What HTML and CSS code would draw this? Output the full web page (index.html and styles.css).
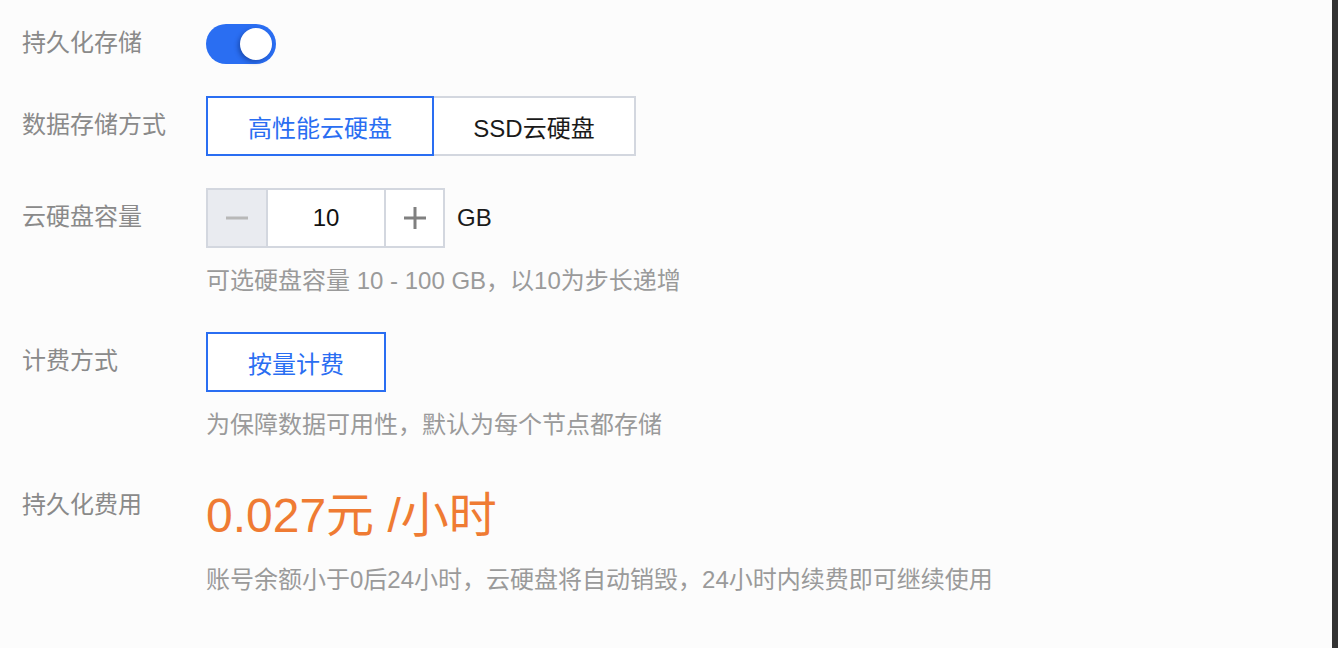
FILE: index.html
```html
<!DOCTYPE html>
<html lang="zh-CN">
<head>
<meta charset="utf-8">
<title>持久化存储</title>
<link rel="stylesheet" href="styles.css">
</head>
<body>
<div class="form">
  <div class="row row-toggle">
    <div class="label">持久化存储</div>
    <div class="field">
      <div class="switch on"><span class="knob"></span></div>
    </div>
  </div>

  <div class="row">
    <div class="label">数据存储方式</div>
    <div class="field">
      <div class="seg">
        <div class="seg-btn active w1">高性能云硬盘</div>
        <div class="seg-btn w2">SSD云硬盘</div>
      </div>
    </div>
  </div>

  <div class="row">
    <div class="label">云硬盘容量</div>
    <div class="field">
      <div class="stepper-line">
        <div class="stepper">
          <div class="step minus"><span class="bar"></span></div>
          <div class="value">10</div>
          <div class="step plus"><span class="bar"></span><span class="bar v"></span></div>
        </div>
        <span class="unit">GB</span>
      </div>
    </div>
  </div>
  <div class="hint">可选硬盘容量 10 - 100 GB，以10为步长递增</div>

  <div class="row">
    <div class="label">计费方式</div>
    <div class="field">
      <div class="seg-btn active w3">按量计费</div>
    </div>
  </div>
  <div class="hint">为保障数据可用性，默认为每个节点都存储</div>

  <div class="row row-price">
    <div class="label tall">持久化费用</div>
    <div class="field">
      <div class="price">0.027元 /小时</div>
    </div>
  </div>
  <div class="hint hint-last">账号余额小于0后24小时，云硬盘将自动销毁，24小时内续费即可继续使用</div>
</div>
<div class="scrollbar"></div>
</body>
</html>
```

FILE: styles.css
```css
html, body {
  margin: 0;
  padding: 0;
  background: #fcfcfc;
}
body {
  font-family: "Liberation Sans", "Noto Sans CJK SC", sans-serif;
  font-size: 24px;
  color: #222;
  height: 648px;
  overflow: hidden;
}
.form {
  padding: 24px 0 0 22px;
}
.row {
  display: flex;
  align-items: center;
  margin-bottom: 32px;
}
.label {
  width: 184px;
  flex: none;
  color: #8a8a8a;
  line-height: 34px;
  margin-top: -3px;
}
.field {
  display: flex;
  align-items: center;
}

/* switch */
.switch {
  width: 70px;
  height: 40px;
  border-radius: 20px;
  background: #2a6ef2;
  position: relative;
}
.switch .knob {
  position: absolute;
  right: 4px;
  top: 4px;
  width: 32px;
  height: 32px;
  border-radius: 50%;
  background: #fff;
  box-shadow: -2px 2px 4px rgba(10, 40, 110, 0.45);
}

/* segmented buttons */
.seg {
  display: flex;
}
.seg-btn {
  box-sizing: border-box;
  height: 60px;
  display: flex;
  align-items: center;
  justify-content: center;
  border: 2px solid #d3d7df;
  background: #fff;
  color: #1a1a1a;
}
.seg-btn.active {
  border-color: #2a6ef2;
  color: #2a6ef2;
  position: relative;
  z-index: 1;
}
.w1 { width: 228px; }
.w2 { width: 204px; margin-left: -2px; }
.w3 { width: 180px; }

/* stepper */
.stepper-line {
  display: flex;
  align-items: center;
}
.stepper {
  display: flex;
  height: 60px;
}
.step, .value {
  box-sizing: border-box;
  height: 60px;
  border: 2px solid #d3d7df;
  display: flex;
  align-items: center;
  justify-content: center;
  position: relative;
}
.step.minus {
  width: 62px;
  background: #e9ebf0;
}
.value {
  width: 120px;
  margin-left: -2px;
  background: #fff;
  color: #111;
}
.step.plus {
  width: 61px;
  margin-left: -2px;
  background: #fff;
}
.bar {
  position: absolute;
  width: 22px;
  height: 3px;
  left: 50%;
  top: 50%;
  transform: translate(-50%, -50%);
  background: #b8b8b8;
}
.plus .bar {
  background: #808080;
}
.plus .bar.v {
  width: 3px;
  height: 22px;
}
.unit {
  margin-left: 12px;
  color: #1a1a1a;
}

/* hints */
.hint {
  margin: -16px 0 34px 184px;
  line-height: 34px;
  color: #9a9a9a;
}
.hint-last {
  margin-top: 18px;
}

/* price */
.row-price {
  align-items: flex-start;
  margin-bottom: 0;
}
.label.tall {
  line-height: 58px;
  margin-top: 0;
}
.price {
  margin-top: 11px;
  font-size: 48px;
  line-height: 58px;
  color: #ef7b33;
}

/* scrollbar overlay */
.scrollbar {
  position: fixed;
  top: 0;
  right: 0;
  width: 6px;
  height: 100%;
  background: #333;
}
```
